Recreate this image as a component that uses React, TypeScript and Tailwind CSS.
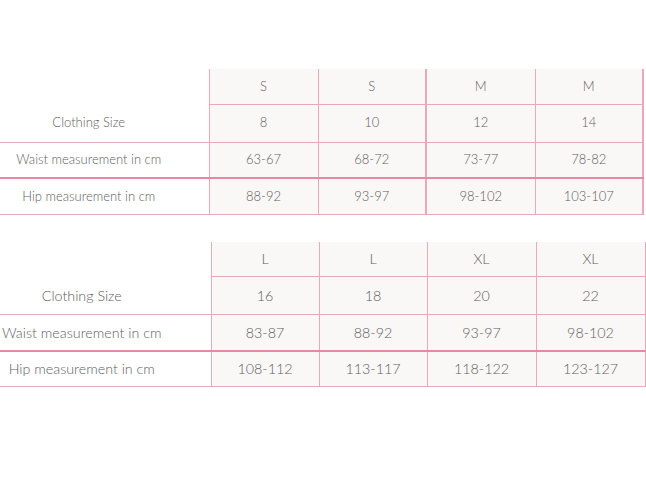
import type { ReactNode } from 'react';

type SizeRow = { label: string; values: string[] };

interface SizeTableProps {
  letters: string[];
  rows: SizeRow[];
  widths: string[];
  labelPad: string;
  textSize: string;
  thickCols: boolean;
  className?: string;
}

const line = 'border-[#e9a9bb]';

function Cell({ children, className = '' }: { children?: ReactNode; className?: string }) {
  return <td className={`p-0 text-center align-middle ${className}`}>{children}</td>;
}

function SizeTable({ letters, rows, widths, labelPad, textSize, thickCols, className = '' }: SizeTableProps) {
  const heights = ['h-[38px]', 'h-[36px]', 'h-[36px]'];
  const thick = (i: number) => (thickCols && (i === 1 || i === 3) ? 'border-r-2' : '');
  return (
    <table className={`border-collapse table-fixed ${textSize} ${className}`}>
      <colgroup>
        {widths.map((w, i) => (
          <col key={i} className={w} />
        ))}
      </colgroup>
      <tbody>
        <tr className="h-[35px]">
          <Cell />
          {letters.map((l, i) => (
            <Cell key={i} className={`border-l border-r border-b ${line} bg-[#faf8f7] ${thick(i)}`}>
              {l}
            </Cell>
          ))}
        </tr>
        {rows.map((row, r) => (
          <tr key={row.label} className={heights[r]}>
            <Cell className={`border-b ${line} ${labelPad} ${r === 1 ? 'border-b-2 border-b-[#e48aa5]' : ''}`}>
              {row.label}
            </Cell>
            {row.values.map((v, i) => (
              <Cell
                key={i}
                className={`border-l border-r border-b ${line} bg-[#faf8f7] ${thick(i)} ${r === 1 ? 'border-b-2 border-b-[#e48aa5]' : ''}`}
              >
                {v}
              </Cell>
            ))}
          </tr>
        ))}
      </tbody>
    </table>
  );
}

export default function App() {
  return (
    <div
      className="w-[646px] h-[484px] bg-white text-[#606060] font-light overflow-hidden"
      style={{ fontFamily: 'Lato, "Noto Sans", sans-serif' }}
    >
      <div className="pt-[69px]">
        <SizeTable
          letters={['S', 'S', 'M', 'M']}
          rows={[
            { label: 'Clothing Size', values: ['8', '10', '12', '14'] },
            { label: 'Waist measurement in cm', values: ['63-67', '68-72', '73-77', '78-82'] },
            { label: 'Hip measurement in cm', values: ['88-92', '93-97', '98-102', '103-107'] },
          ]}
          widths={['w-[209px]', 'w-[109px]', 'w-[108px]', 'w-[109px]', 'w-[108px]']}
          labelPad="pr-[31px]"
          textSize="text-[13px]"
          thickCols
        />
        <SizeTable
          className="mt-[27px]"
          letters={['L', 'L', 'XL', 'XL']}
          rows={[
            { label: 'Clothing Size', values: ['16', '18', '20', '22'] },
            { label: 'Waist measurement in cm', values: ['83-87', '88-92', '93-97', '98-102'] },
            { label: 'Hip measurement in cm', values: ['108-112', '113-117', '118-122', '123-127'] },
          ]}
          widths={['w-[211px]', 'w-[108px]', 'w-[108px]', 'w-[109px]', 'w-[109px]']}
          labelPad="pr-[47px]"
          textSize="text-[14.3px]"
          thickCols={false}
        />
      </div>
    </div>
  );
}
